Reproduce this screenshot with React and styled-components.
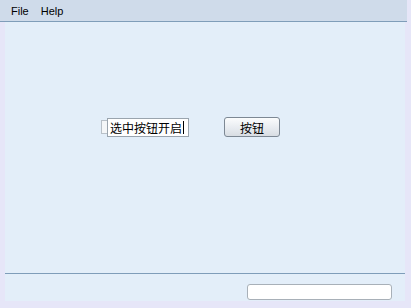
import React from 'react'
import styled, { createGlobalStyle } from 'styled-components'

const GlobalStyle = createGlobalStyle`
  html, body {
    margin: 0;
    padding: 0;
    background: #e6e6f8;
  }
  body {
    font-family: "Liberation Sans", "Noto Sans CJK SC", sans-serif;
  }
`

const Window = styled.div`
  display: flex;
  flex-direction: column;
  width: 411px;
  height: 308px;
  background: #e6e6f8;
  overflow: hidden;
`

const MenuBar = styled.div`
  display: flex;
  align-items: center;
  height: 22px;
  padding-left: 11px;
  gap: 12px;
  background: #cfdbea;
  border-bottom: 1px solid #7f9db9;
  box-sizing: border-box;
  margin-right: 4px;
  font-size: 11px;
  color: #000;
`

const MenuItem = styled.span`
  line-height: 14px;
`

const Panel = styled.div`
  flex: 1;
  display: flex;
  flex-direction: column;
  margin: 0 6px 0 5px;
  background: #e3eef9;
`

const Content = styled.div`
  flex: 1;
`

const Row = styled.div`
  display: flex;
  align-items: center;
  height: 20px;
  margin: 95px 0 0 96px;
`

const Check = styled.span`
  width: 9px;
  height: 12px;
  border: 1px solid #b8c0c8;
  background: #f4f6f8;
  flex-shrink: 0;
`

const TextField = styled.div`
  display: flex;
  align-items: center;
  margin-left: -5px;
  height: 19px;
  width: 82px;
  box-sizing: border-box;
  padding-left: 2px;
  background: #fff;
  border: 1px solid #9aa4ae;
  font-family: "Noto Sans CJK SC", sans-serif;
  font-size: 12px;
  color: #000;
`

const Caret = styled.span`
  width: 1px;
  height: 13px;
  margin-left: 1px;
  background: #000;
`

const Button = styled.button`
  margin-left: 35px;
  width: 56px;
  height: 20px;
  padding: 0;
  border: 1px solid #7d8894;
  border-radius: 3px;
  background: linear-gradient(#fbfcfd, #e6eaef 60%, #d8dde3);
  font-family: "Noto Sans CJK SC", sans-serif;
  font-size: 12px;
  color: #000;
`

const Status = styled.div`
  display: flex;
  justify-content: flex-end;
  align-items: flex-start;
  height: 28px;
  box-sizing: border-box;
  padding: 10px 13px 0 0;
  border-top: 1px solid #7f9db9;
`

const StatusField = styled.div`
  width: 145px;
  height: 16px;
  box-sizing: border-box;
  background: #fff;
  border: 1px solid #a8b0b8;
  border-radius: 3px;
`

const Bottom = styled.div`
  height: 7px;
`

const App = () => {
  return (
    <>
      <GlobalStyle />
      <Window>
        <MenuBar>
          <MenuItem>File</MenuItem>
          <MenuItem>Help</MenuItem>
        </MenuBar>
        <Panel>
          <Content>
            <Row>
              <Check />
              <TextField>
                选中按钮开启
                <Caret />
              </TextField>
              <Button>按钮</Button>
            </Row>
          </Content>
          <Status>
            <StatusField />
          </Status>
        </Panel>
        <Bottom />
      </Window>
    </>
  )
}

export default App
